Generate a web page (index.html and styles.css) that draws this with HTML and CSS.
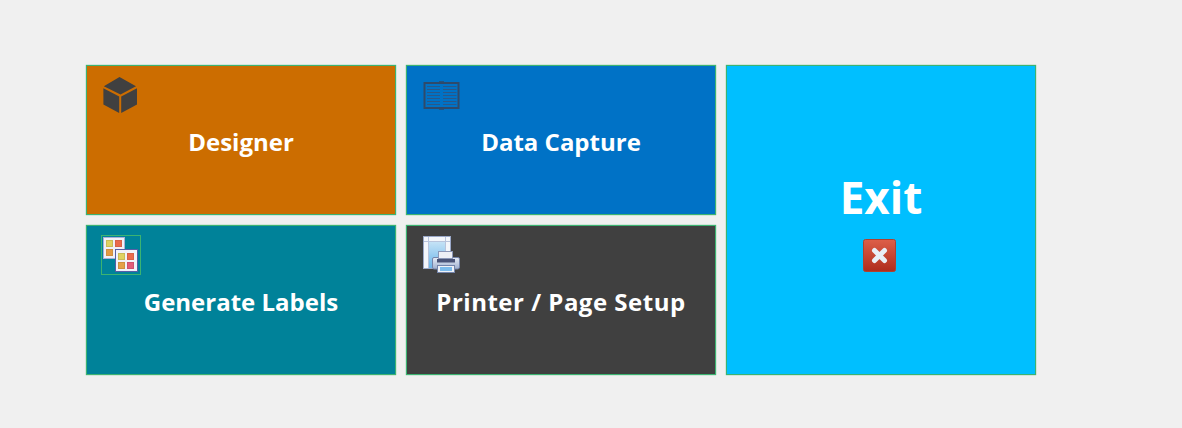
FILE: index.html
```html
<!DOCTYPE html>
<html lang="en">
<head>
<meta charset="utf-8">
<title>Label Menu</title>
<link rel="stylesheet" href="styles.css">
</head>
<body>
<main class="menu">
  <button class="tile tile-designer">
    <svg class="icon icon-cube" width="36" height="38" viewBox="0 0 36 38">
      <path fill="#404040" d="M17.500 1 34 10.200 18.500 18.600 1.800 10.200Z"/>
      <path fill="#404040" d="M1.400 12.200 17.200 20.400V37L1.400 28.600Z"/>
      <path fill="#404040" d="M35 12.200V28.600L19.200 37V20.400Z"/>
    </svg>
    <span class="label">Designer</span>
  </button>
  <button class="tile tile-capture">
    <svg class="icon icon-book" width="38" height="30" viewBox="0 0 38 30">
      <path fill="none" stroke="#2f4a6b" stroke-width="2" d="M1.500 2H35.500V27H1.500Z"/>
      <path fill="none" stroke="#2f4a6b" stroke-width="2.500" d="M16 1.500H21M16 27.500H21"/>
      <path fill="none" stroke="#29588a" stroke-width="1.200" d="M4 5.500H17M20 5.500H33.500M4 8.500H17M20 8.500H33.500M4 11.500H17M20 11.500H33.500M4 14.500H17M20 14.500H33.500M4 17.500H17M20 17.500H33.500M4 20.500H17M20 20.500H33.500M4 23.500H17M20 23.500H33.500"/>
    </svg>
    <span class="label">Data Capture</span>
  </button>
  <button class="tile tile-exit">
    <span class="label label-large">Exit</span>
    <svg class="exit-mark" width="33" height="33" viewBox="0 0 33 33">
      <defs>
        <linearGradient id="red" x1="0" y1="0" x2="0" y2="1">
          <stop offset="0" stop-color="#dd5f48"/>
          <stop offset="1" stop-color="#ae2c1e"/>
        </linearGradient>
      </defs>
      <rect x="0.500" y="0.500" width="32" height="32" rx="2" fill="url(#red)" stroke="#b0402f"/>
      <path fill="none" stroke="#e8eef6" stroke-width="5" stroke-linecap="round" d="M11.500 11.500 21.500 21.500M21.500 11.500 11.500 21.500"/>
    </svg>
  </button>
  <button class="tile tile-generate">
    <span class="icon icon-frame">
      <svg width="38" height="38" viewBox="0 0 38 38">
        <rect x="1.500" y="1.500" width="21" height="21" fill="#f0f0f8" stroke="#a9afd8"/>
        <rect x="4.500" y="4.500" width="6" height="6" fill="#e0d262" stroke="#c9bb58"/>
        <rect x="13.500" y="4.500" width="6" height="6" fill="#ea6a4c" stroke="#d66248"/>
        <rect x="4.500" y="13.500" width="6" height="6" fill="#e49a42" stroke="#cf9040"/>
        <rect x="13.500" y="13.500" width="22" height="22" fill="#f2f2f9" stroke="#565ea6"/>
        <rect x="16.500" y="17.500" width="6" height="6" fill="#e0d262" stroke="#c9bb58"/>
        <rect x="25.500" y="17.500" width="6" height="6" fill="#ea6a4c" stroke="#d66248"/>
        <rect x="16.500" y="26.500" width="6" height="6" fill="#e4a248" stroke="#cf9040"/>
        <rect x="25.500" y="26.500" width="6" height="6" fill="#e25c78" stroke="#cc5270"/>
      </svg>
    </span>
    <span class="label">Generate Labels</span>
  </button>
  <button class="tile tile-printer">
    <svg class="icon icon-printer" width="38" height="38" viewBox="0 0 38 38">
      <defs>
        <linearGradient id="sheet" x1="0" y1="0" x2="0" y2="1">
          <stop offset="0" stop-color="#c4e2f6"/>
          <stop offset="1" stop-color="#6cb6ea"/>
        </linearGradient>
        <linearGradient id="body" x1="0" y1="0" x2="0" y2="1">
          <stop offset="0" stop-color="#e6ecf6"/>
          <stop offset="1" stop-color="#9fb0cf"/>
        </linearGradient>
      </defs>
      <rect x="0.500" y="0.500" width="27" height="32" fill="#f3f6fb" stroke="#9aa8c8"/>
      <path fill="none" stroke="#b8c4dc" d="M5.500 1V32M22.500 1V32M1 5.500H27"/>
      <rect x="6" y="6" width="16" height="26" fill="url(#sheet)"/>
      <path fill="url(#body)" stroke="#7484aa" d="M11 21.500H35Q36.500 21.500 36.500 23V31Q36.500 33 34.500 33H11Q9.500 33 9.500 31V23Q9.500 21.500 11 21.500Z"/>
      <rect x="15.500" y="15.500" width="14" height="7" fill="#eef0f6" stroke="#8c98b8"/>
      <rect x="14" y="23" width="18" height="3.500" fill="#4a5478"/>
      <rect x="14.500" y="29.500" width="17" height="7" fill="#eef2f8" stroke="#7484aa"/>
      <rect x="17" y="31" width="12" height="4" fill="#7cbcec"/>
    </svg>
    <span class="label label-spaced">Printer / Page Setup</span>
  </button>
</main>
</body>
</html>
```

FILE: styles.css
```css
html, body {
  margin: 0;
  height: 100%;
}

body {
  background: #f0f0f0;
  font-family: "Open Sans", "Noto Sans", "Liberation Sans", sans-serif;
  overflow: hidden;
}

.menu {
  display: grid;
  grid-template-columns: repeat(3, 310px);
  grid-template-rows: repeat(2, 150px);
  gap: 10px;
  padding: 65px 0 0 86px;
}

.tile {
  position: relative;
  display: flex;
  flex-direction: column;
  align-items: center;
  justify-content: center;
  box-sizing: border-box;
  margin: 0;
  padding: 4px 0 0;
  border: 1px solid #3cb371;
  box-shadow: 0 0 1px #3cb371;
  color: #fff;
  font-family: inherit;
}

.tile-designer { background: #cc6d00; }
.tile-capture { background: #0072c6; }
.tile-generate { background: #008299; }
.tile-printer { background: #404040; }

.tile-exit {
  grid-column: 3;
  grid-row: 1 / span 2;
  background: #00bfff;
  padding: 0;
}

.label {
  font-size: 24px;
  font-weight: 700;
  line-height: 32px;
}

.label-spaced {
  letter-spacing: 0.5px;
}

.label-large {
  font-size: 44px;
  line-height: 56px;
}

.exit-mark {
  display: block;
  margin: 14px 3px 0 0;
  filter: blur(0.3px);
}

.icon {
  position: absolute;
  display: block;
  filter: blur(0.3px);
}

.icon-cube { left: 15px; top: 10px; }
.icon-book { left: 16px; top: 15px; }
.icon-frame {
  left: 14px;
  top: 9px;
  width: 38px;
  height: 38px;
  border: 1px solid #3cb371;
  filter: none;
}
.icon-frame svg { display: block; filter: blur(0.3px); }
.icon-printer { left: 16px; top: 10px; }
```
